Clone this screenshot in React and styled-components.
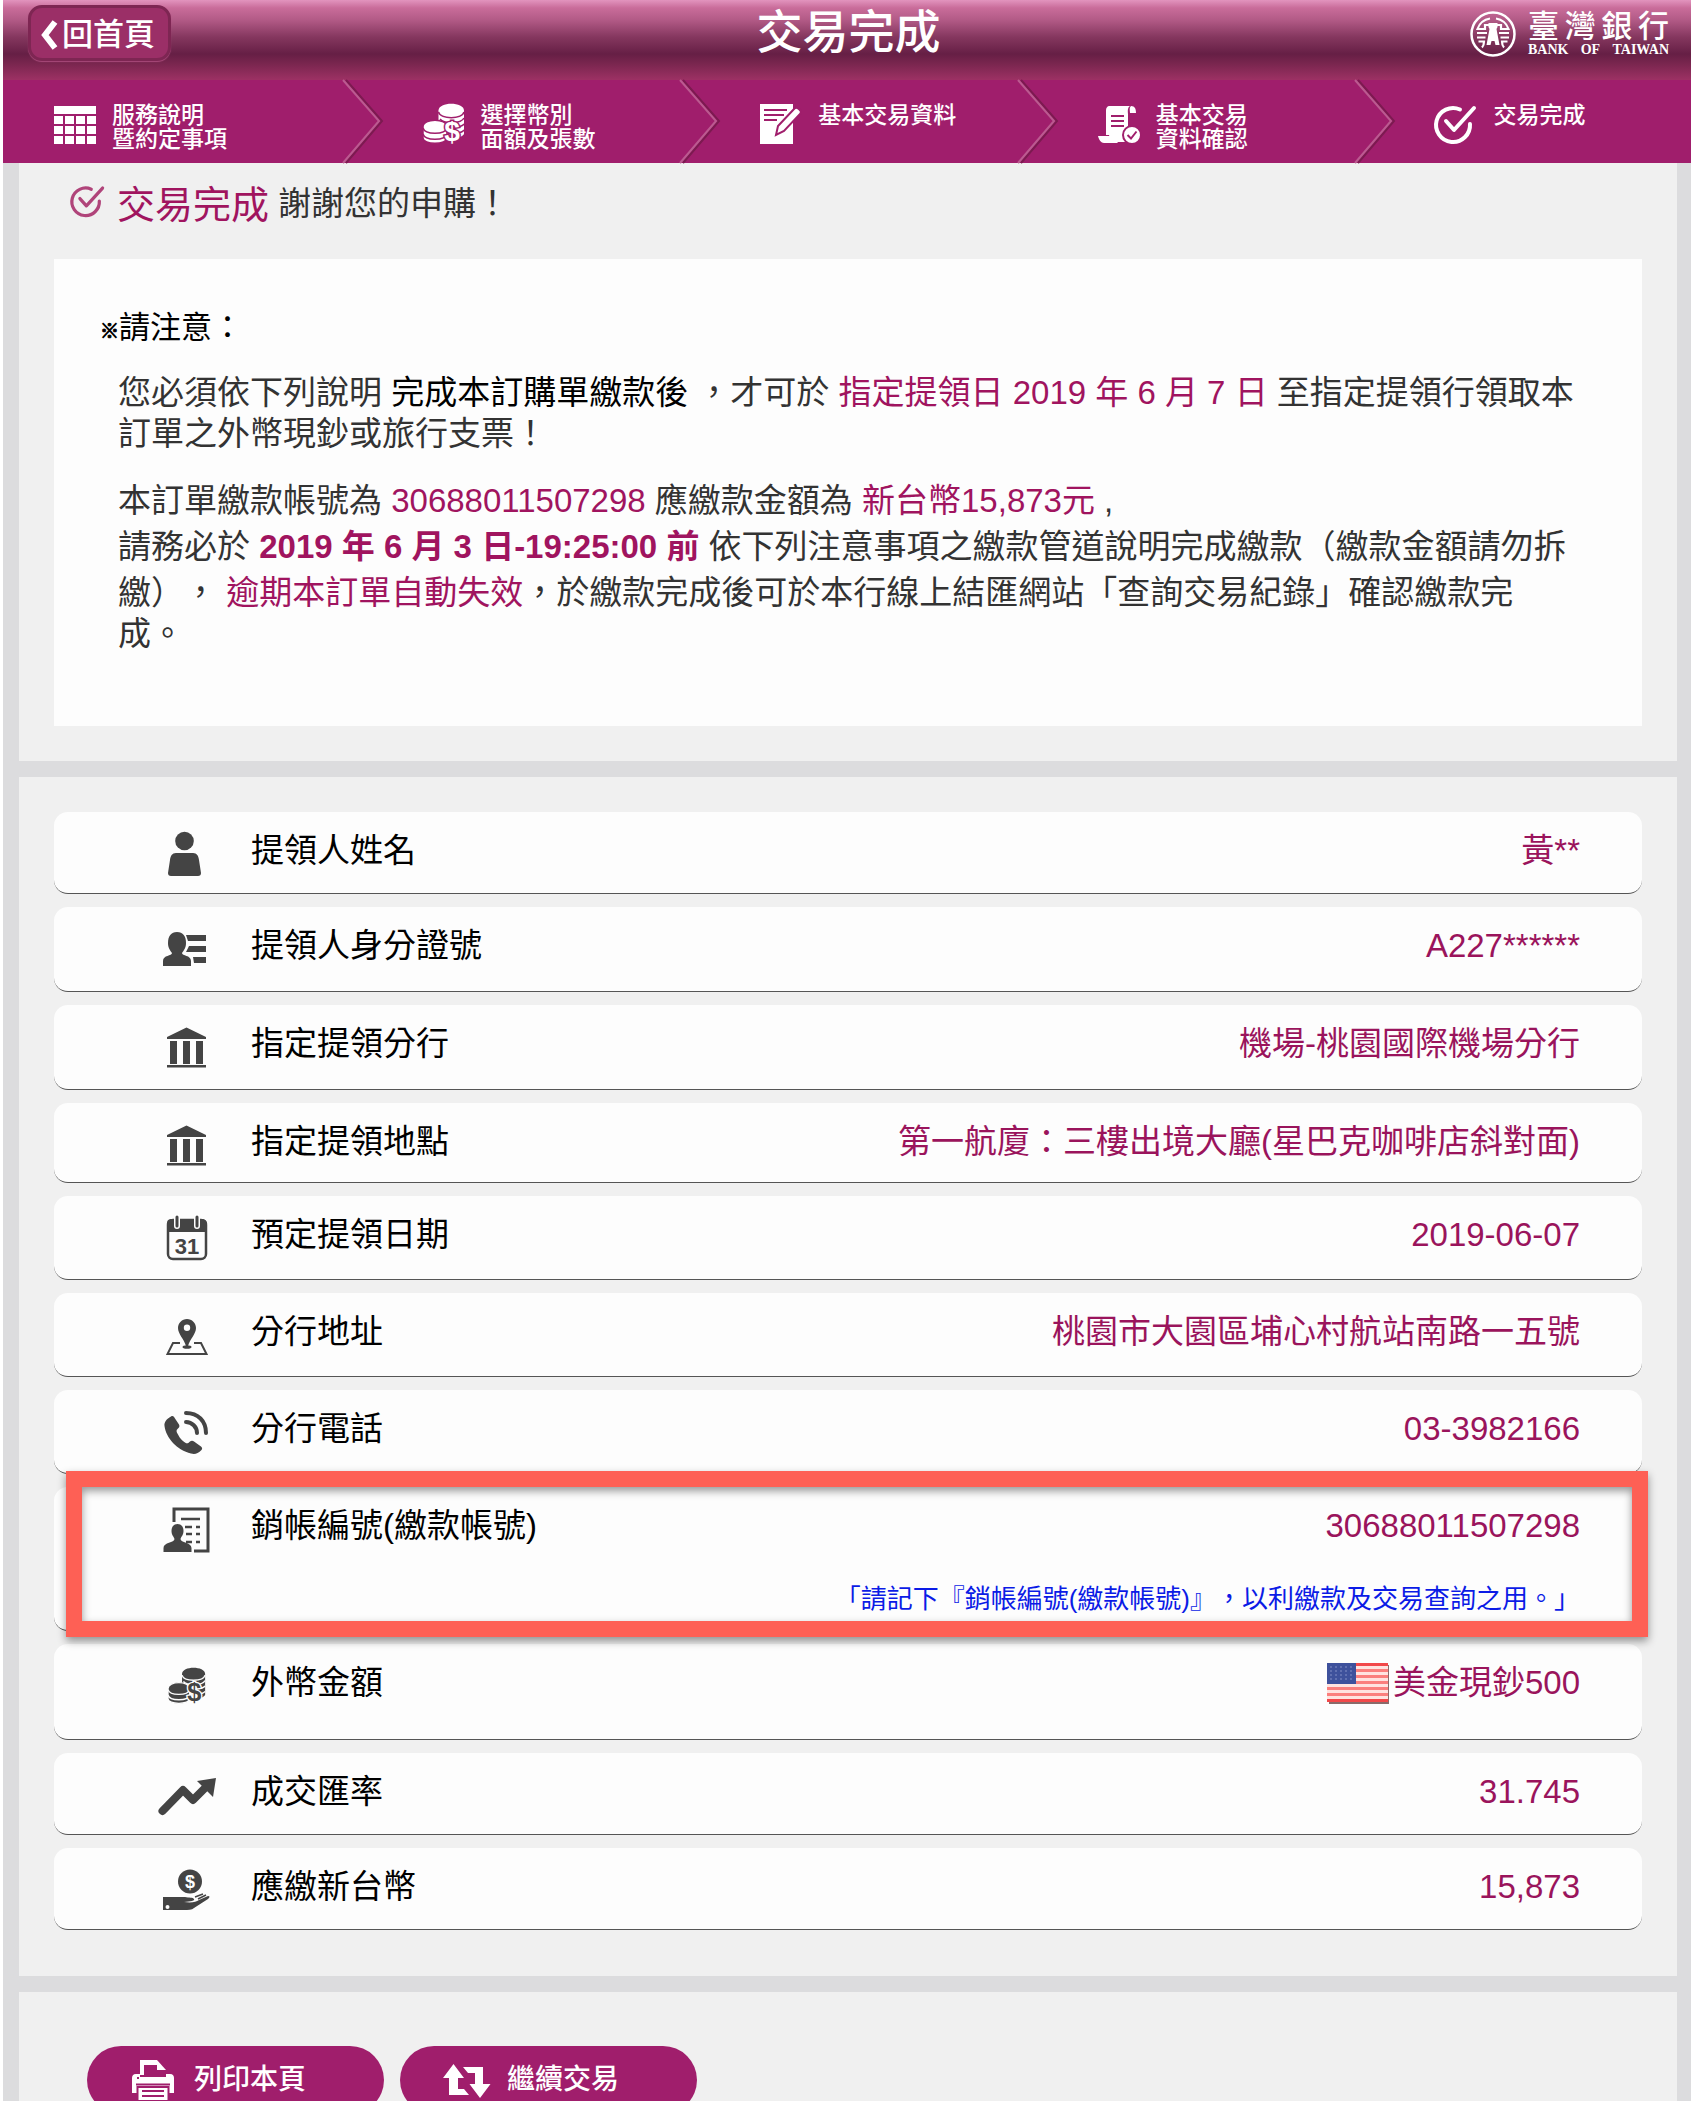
import React from 'react'
import styled, { createGlobalStyle } from 'styled-components'


const GlobalStyle = createGlobalStyle`
  * {
    box-sizing: border-box;
  }

  body {
    margin: 0;
    background: #fff;
    color: #333;
    font-family: "Liberation Sans", "Noto Sans CJK TC", sans-serif;
    font-size: 33px;
    text-spacing-trim: space-all;
  }

  svg {
    display: block;
    flex: none;
    overflow: visible;
  }

  button {
    font-family: inherit;
    cursor: pointer;
  }
`;

/* ---------- icons ---------- */

const CheckIcon = ({ size = 42, weight = 4 }) => (
  <svg width={size} height={size} viewBox="0 0 42 42" fill="none" stroke="currentColor" strokeWidth={weight} strokeLinecap="round" aria-hidden="true">
    <path d="M25 6.500A17 17 0 1 0 35 21" />
    <path d="M11 18l8 9L39 5" strokeLinejoin="round" />
  </svg>
)

const TableIcon = () => (
  <svg width="42" height="42" viewBox="0 0 42 42" fill="currentColor" aria-hidden="true">
    <path d="M0 3h42v8H0z" />
    {[13, 23, 33].map(y => [0, 11, 22, 33].map(x => (
      <rect key={`${x}-${y}`} x={x} y={y} width="9" height="8" />
    )))}
  </svg>
)

const CoinsIcon = ({ size = 42, back = '#a01e6c' }) => (
  <svg width={size} height={size} viewBox="0 0 42 42" fill="currentColor" aria-hidden="true">
    <path d="M15.500 7.500C15.500 -1.500 41 -1.500 41 7.500V31c-2 3-8 5-13 4L15.500 20z" />
    <path d="M15.500 9c2 7.500 23.500 7.500 25.500 0M17 16c4 5 21 5 24-1M20 22c5 3 18 3 21-1M22 28c5 3 16 3 19-1" fill="none" stroke={back} strokeWidth="1.500" />
    <path d="M0 24c0-9 24-9 24 0v11c0 7-24 7-24 0z" stroke={back} strokeWidth="1.500" />
    <path d="M0 25c2 7 22 7 24 0M0 31c2 7 22 7 24 0" fill="none" stroke={back} strokeWidth="1.500" />
    <text x="29" y="38" textAnchor="middle" fontFamily="Liberation Sans, sans-serif" fontWeight="bold" fontSize="28" stroke={back} strokeWidth="3" paintOrder="stroke">$</text>
  </svg>
)

const EditIcon = () => (
  <svg width="42" height="42" viewBox="0 0 42 42" fill="currentColor" aria-hidden="true">
    <path d="M0 1h33v40H0z" />
    <path d="M4 7h23M4 12h20M4 17h13" stroke="#a01e6c" strokeWidth="2" />
    <path d="M34.500 5.500c2-2 8 2 6 5L24 28l-8 4 2-9z" stroke="#a01e6c" strokeWidth="2" />
  </svg>
)

const ScrollIcon = () => (
  <svg width="42" height="42" viewBox="0 0 42 42" fill="currentColor" aria-hidden="true">
    <path d="M12 3h20c-3 2-2 6-2 8v28H15c-3 0-3-4-4-7H8V8c0-3 1-5 4-5z" />
    <path d="M33 3c4 0 5 3 5 7h-6c0-3-1-5 1-7zM0 33h17c0 3 1 5 3 7H6c-3 0-5-3-6-7z" />
    <path d="M13 13h13M13 18h13M13 23h13" stroke="#a01e6c" strokeWidth="2" />
    <circle cx="34" cy="32" r="9" stroke="#a01e6c" strokeWidth="2" />
    <path d="M29.500 32l3.500 3.500 5.500-7" fill="none" stroke="#a01e6c" strokeWidth="2" />
  </svg>
)

const RowSvg = ({ children }) => (
  <svg width="58" height="48" viewBox="0 0 58 48" fill="currentColor" aria-hidden="true">{children}</svg>
)

const PersonIcon = () => (
  <RowSvg>
    <circle cx="26.500" cy="11" r="9.300" />
    <path d="M18 23h17c4 0 5.500 3 6 7l2 13c0 2-1 3-3 3H13c-2 0-3-1-3-3l2-13c.5-4 2-7 6-7z" />
  </RowSvg>
)

const IdIcon = () => (
  <RowSvg>
    <path d="M19 7c6 0 9 4 9 11 0 5-2 7-4 10 0 3 9 2 9 8v5H5v-5c0-6 9-5 9-8-2-3-4-5-4-10 0-7 3-11 9-11z" />
    <path d="M28 10h20v6H30zM31 21h17v6H28zM35 32h13v6H36z" />
  </RowSvg>
)

const BankIcon = () => (
  <RowSvg>
    <path d="M28.500 4.500L48 14v2H9v-2zM12 18h7v23h-7zM25 18h7v23h-7zM38 18h7v23h-7zM9 42h39v2.500H9z" />
  </RowSvg>
)

const CalendarIcon = () => (
  <RowSvg>
    <rect x="10" y="6" width="38" height="39" rx="5" fill="none" stroke="currentColor" strokeWidth="2.500" />
    <path d="M9 18V9c0-3 2-4 4-4h31c3 0 5 2 5 4v9z" />
    <path d="M19 3v9M39 3v9" stroke="#fff" strokeWidth="6" strokeLinecap="round" />
    <path d="M19 3v9M39 3v9" stroke="currentColor" strokeWidth="3" strokeLinecap="round" />
    <text x="29" y="40" textAnchor="middle" fontFamily="Liberation Sans, sans-serif" fontWeight="bold" fontSize="22">31</text>
  </RowSvg>
)

const PinIcon = () => (
  <RowSvg>
    <path fillRule="evenodd" d="M29 8c5 0 9 4 9 9 0 6-6 11-8 18h-2c-2-7-8-12-8-18 0-5 4-9 9-9zm0 5.500a3.200 3.200 0 1 0 0 6.400 3.200 3.200 0 0 0 0-6.400z" />
    <path d="M22 32h-7L9.500 43h39L43 32h-7" fill="none" stroke="currentColor" strokeWidth="2" />
    <ellipse cx="29" cy="36" rx="4.500" ry="1.800" />
  </RowSvg>
)

const PhoneIcon = () => (
  <RowSvg>
    <path d="M13 8.500c2-1 3 0 4 2l4 6c1 2 0 3-1 4-2 1.500-2 3 0 6 2 4 4 6 7 8 2 1.500 3 1 5-1 1-1 3-1 4 0l7 5c1.500 1 1.500 3 0 4-3 3-6 4-10 3C19 42 8 30 6.500 18c-.5-4 2-7 6.500-9.500z" />
    <path d="M28 5c12 0 20 8 20 20M28 14c6 0 11 5 11 11" fill="none" stroke="currentColor" strokeWidth="4" strokeLinecap="round" />
  </RowSvg>
)

const AccountIcon = () => (
  <RowSvg>
    <path d="M16 17V4h34v42H36" fill="none" stroke="currentColor" strokeWidth="3" />
    <path d="M23 14h19M27 22h7M38 22h4M28 29h6M38 29h4M28 37h6M38 37h4" stroke="currentColor" strokeWidth="2.500" />
    <path d="M19.500 19c4 0 6 3 6 7s-2 5-3 8c0 4 11 3 11 9v4h-28v-4c0-6 11-5 11-9-1-3-3-4-3-8s2-7 6-7z" />
  </RowSvg>
)

const TrendIcon = () => (
  <RowSvg>
    <path d="M4.500 40L25 19l10 10 14-14" fill="none" stroke="currentColor" strokeWidth="8" strokeLinecap="round" strokeLinejoin="round" />
    <path d="M39 10l19-3-3 19z" />
  </RowSvg>
)

const HandIcon = () => (
  <RowSvg>
    <circle cx="32" cy="15.500" r="12" />
    <text x="32" y="22" textAnchor="middle" fontFamily="Liberation Sans, sans-serif" fontWeight="bold" fontSize="18" fill="#fff">$</text>
    <path fillRule="evenodd" d="M5 31h22c4 1 8 0 9 2 1 2-3 2-10 3 8 1 12 0 15-2l9-4c2 0 2 1 0 3L36 42c-2 2-6 2-10 2H5zM9.500 39a2 2 0 1 0 0 4 2 2 0 0 0 0-4z" />
    <path d="M37 31l8-3M40 33l8-4" stroke="currentColor" strokeWidth="1.500" />
  </RowSvg>
)

const PrinterIcon = () => (
  <svg width="52" height="48" viewBox="0 0 52 48" fill="currentColor" aria-hidden="true">
    <path d="M12 4h17v5h-13v10h-4z" />
    <path d="M29 4l9 10h-9z" />
    <path fillRule="evenodd" d="M8 18h4v3h26v-3h4c3 0 4 2 4 4v15H4V22c0-2 1-4 4-4zm1 3v2h2v-2z" />
    <path d="M8 28.500h34" stroke="#a01e6c" strokeWidth="2" />
    <path d="M9.500 31h31v14h-31z" stroke="#a01e6c" strokeWidth="2" />
    <path d="M14 35h22M14 40h22" stroke="#a01e6c" strokeWidth="2" />
  </svg>
)

const RepeatIcon = () => (
  <svg width="52" height="48" viewBox="0 0 52 48" fill="currentColor" aria-hidden="true">
    <path d="M12.500 8L23 22h-6v11h6l5 6H8V22H2z" />
    <path d="M22 11h20v17h7.500L39 42 28.500 28H34V17h-7z" />
  </svg>
)

const UsFlag = () => (
  <svg width="62" height="41" viewBox="0 0 62 41" role="img" aria-label="美國">
    <path d="M2 2h60v39H2z" fill="#8a6a6a" />
    <path d="M0 0h61v39H0z" fill="#ffe3e0" />
    {[0, 6, 12, 18, 24, 30, 36].map(y => (
      <rect key={y} x="0" y={y} width="61" height="3" fill={y === 0 || y === 36 ? '#f2484a' : '#fb7f7d'} />
    ))}
    <path d="M0 0h29v21H0z" fill="#3e519c" />
    {[4, 8, 12, 16].map(y => [4, 9, 14, 19, 24].map(x => (
      <circle key={`${x}-${y}`} cx={x} cy={y} r="1" fill="#6c7bb8" />
    )))}
  </svg>
)

const BankEmblem = () => (
  <svg width="46" height="46" viewBox="0 0 46 46" fill="none" stroke="#fff" aria-hidden="true">
    <circle cx="23" cy="23" r="21.500" strokeWidth="2.500" />
    <path d="M20 7.500A16 16 0 0 0 7.500 18H15v-4h4M26 7.500A16 16 0 0 1 38.500 18H31v-4h-4M7 22h10M29 22h10M7 26.500h8.500M30.500 26.500H39M8.500 30.500H14c0 3-1 5-2 6M37.500 30.500H32c0 3 1 5 2 6" strokeWidth="2.200" />
    <path d="M18.500 12h9v4l-1 2 3 16h-4l-1-4h-3l-1 4h-4l3-16-1-2z" fill="#fff" stroke="none" />
  </svg>
)

/* ---------- header ---------- */

const Page = styled.div`
  border-left: 3px solid #fff;
  background: #dcdcde;
`;

const Header = styled.header`
  display: grid;
  grid-template-columns: 1fr auto 1fr;
  align-items: start;
  height: 80px;
  padding: 5px 22px 0 25px;
  background: linear-gradient(#e294be 0, #c96c9a 8px, #b25a86 20px, #85375f 37px, #661f45 54px, #7a264f 64px, #9d3164 80px);
`;

const BackButton = styled.button`
  justify-self: start;
  display: flex;
  align-items: center;
  gap: 3px;
  height: 56px;
  padding: 4px 13px 0 8px;
  border: 3px solid #7e2653;
  border-radius: 14px;
  background: #9b2f67;
  box-shadow: 0 1px 1px #a84a7a;
  color: #fff;
  font-size: 31px;
  font-weight: 500;
  line-height: 40px;
`;

const PageTitle = styled.h1`
  margin: 0;
  color: #fff;
  font-size: 46px;
  font-weight: 500;
  line-height: 54px;
`;

const Logo = styled.a`
  justify-self: end;
  display: flex;
  gap: 12px;
  padding-top: 6px;
  color: #fff;
  text-decoration: none;
`;

const LogoName = styled.span`
  display: flex;
  flex-direction: column;
  width: 141px;
`;

const LogoLine = styled.span`
  display: flex;
  justify-content: space-between;
  font-family: ${props => props.$latin ? '"Liberation Serif", serif' : 'inherit'};
  font-size: ${props => props.$latin ? 14 : 31}px;
  font-weight: ${props => props.$latin ? 700 : 500};
  line-height: ${props => props.$latin ? 14 : 32}px;
`;

/* ---------- steps ---------- */

const Steps = styled.ol`
  display: grid;
  grid-template-columns: repeat(5, 1fr);
  height: 83px;
  margin: 0;
  padding: 0;
  background: #a01e6c;
  list-style: none;
`;

const Step = styled.li`
  position: relative;
  display: flex;
  gap: 16px;
  padding: 23px 0 0 82px;
  color: #fff;
  font-size: 23px;
  font-weight: 500;
  line-height: 24px;

  &:first-child {
    padding-left: 51px;
  }
`;

const StepArrow = styled.svg`
  position: absolute;
  top: 0;
  right: -43px;
`;

/* ---------- content ---------- */

const Panel = styled.section`
  margin: 0 14px 16px 16px;
  padding: ${props => props.$pad || '0 35px 35px'};
  background: #f0f0f0;
`;

const DoneTitle = styled.h2`
  display: flex;
  align-items: center;
  height: 76px;
  margin: 0 0 20px;
  padding-left: 17px;
  color: #333;
  font-size: 33px;
  font-weight: 400;

  svg {
    margin-right: 12px;
    color: #b0447a;
  }

  strong {
    margin-right: 9px;
    color: #a0145f;
    font-size: 38px;
    font-weight: 400;
  }
`;

const Notice = styled.div`
  padding: 48px 65px 72px 46px;
  background: #fdfdfd;
`;

const NoticeTitle = styled.h3`
  margin: 0 0 18px;
  color: #000;
  font-size: 31px;
  font-weight: 400;
  line-height: 42px;

  small {
    font-size: 19px;
    line-height: 20px;
    -webkit-text-stroke: 1px #000;
  }
`;

const NoticeText = styled.p`
  margin: 0 0 21px;
  padding-left: 18px;
  line-height: 41px;

  &:last-child {
    margin-bottom: 0;
  }
`;

const Strong = styled.span`
  color: #000;
`;

const Highlight = styled.span`
  display: inline-block;
  padding-top: 5px;
  color: #a0145f;
  font-weight: ${props => props.$bold ? 700 : 400};
`;

const Rows = styled.dl`
  display: flex;
  flex-direction: column;
  gap: 13px;
  margin: 0;
`;

const Row = styled.div`
  position: relative;
  display: grid;
  grid-template-columns: 58px auto 1fr;
  column-gap: 35px;
  align-content: start;
  min-height: ${props => props.$height}px;
  padding: 18px 62px 0 104px;
  border-bottom: 1px solid #555;
  border-radius: 14px;
  background: #fdfdfd;
  line-height: 42px;

  svg {
    color: #444;
  }
`;

const IconCell = styled.div`
  display: flex;
  align-items: center;
  justify-content: center;
  height: 48px;
`;

const Label = styled.dt`
  color: #000;
`;

const Value = styled.dd`
  display: flex;
  align-items: center;
  justify-content: flex-end;
  gap: 4px;
  height: 42px;
  margin: 0;
  color: #9a145c;
`;

const RowNote = styled.dd`
  grid-column: 1 / -1;
  margin: 25px 0 0;
  color: #0b1be6;
  font-size: 26px;
  text-align: right;
`;

/* frame drawn over the row that has to be written down */
const Marker = styled.span`
  position: absolute;
  z-index: 1;
  inset: -16px -6px -7px 12px;
  border: 16px solid #fe6055;
  filter: drop-shadow(0 4px 4px rgba(0, 0, 0, 0.4));
  pointer-events: none;
`;

const Actions = styled.footer`
  display: flex;
  gap: 16px;
  height: 109px;
  margin: 0 14px 0 16px;
  padding: 54px 68px 0;
  overflow: hidden;
  background: #f0f0f0;
`;

const ActionButton = styled.button`
  flex: none;
  display: flex;
  align-items: center;
  gap: 14px;
  width: 297px;
  height: 68px;
  padding: 0 0 0 41px;
  border: 0;
  border-radius: 34px;
  background: #a01e6c;
  color: #fff;
  font-size: 28px;
  font-weight: 500;
  line-height: 40px;
`;

const steps = [
  { icon: <TableIcon />, lines: ['服務說明', '暨約定事項'] },
  { icon: <CoinsIcon />, lines: ['選擇幣別', '面額及張數'] },
  { icon: <EditIcon />, lines: ['基本交易資料'] },
  { icon: <ScrollIcon />, lines: ['基本交易', '資料確認'] },
  { icon: <CheckIcon />, lines: ['交易完成'] },
]

const rows = [
  { icon: <PersonIcon />, label: '提領人姓名', value: '黃**', height: 82 },
  { icon: <IdIcon />, label: '提領人身分證號', value: 'A227******', height: 85 },
  { icon: <BankIcon />, label: '指定提領分行', value: '機場-桃園國際機場分行', height: 85 },
  { icon: <BankIcon />, label: '指定提領地點', value: '第一航廈：三樓出境大廳(星巴克咖啡店斜對面)', height: 80 },
  { icon: <CalendarIcon />, label: '預定提領日期', value: '2019-06-07', height: 84 },
  { icon: <PinIcon />, label: '分行地址', value: '桃園市大園區埔心村航站南路一五號', height: 84 },
  { icon: <PhoneIcon />, label: '分行電話', value: '03-3982166', height: 84 },
  {
    icon: <AccountIcon />,
    label: '銷帳編號(繳款帳號)',
    value: '30688011507298',
    note: '「請記下『銷帳編號(繳款帳號)』，以利繳款及交易查詢之用。」',
    height: 144,
  },
  { icon: <CoinsIcon size={38} back="#fdfdfd" />, label: '外幣金額', value: '美金現鈔500', flag: <UsFlag />, height: 96 },
  { icon: <TrendIcon />, label: '成交匯率', value: '31.745', height: 82 },
  { icon: <HandIcon />, label: '應繳新台幣', value: '15,873', height: 82 },
]

export default function App () {

  return (
    <Page lang="zh-Hant">
      <GlobalStyle />

      <Header>
        <BackButton type="button">
          <svg width="20" height="30" viewBox="0 0 20 30" fill="none" stroke="currentColor" strokeWidth="6" aria-hidden="true">
            <path d="M16 2L6 15l10 13" />
          </svg>
          回首頁
        </BackButton>
        <PageTitle>交易完成</PageTitle>
        <Logo href="#" aria-label="臺灣銀行 BANK OF TAIWAN">
          <BankEmblem />
          <LogoName>
            <LogoLine><span>臺</span><span>灣</span><span>銀</span><span>行</span></LogoLine>
            <LogoLine $latin><span>BANK</span><span>OF</span><span>TAIWAN</span></LogoLine>
          </LogoName>
        </Logo>
      </Header>

      <Steps>
        {steps.map((step, index) => (
          <Step key={index}>
            {step.icon}
            <span>
              {step.lines.map(line => <div key={line}>{line}</div>)}
            </span>
            {index < steps.length - 1 && (
              <StepArrow width="42" height="83" viewBox="0 0 42 83" fill="none" strokeWidth="2" aria-hidden="true">
                <path d="M4 0l36 41L4 83" stroke="#7c1a50" />
                <path d="M1 0l36 41L1 83" stroke="#bb5a90" />
              </StepArrow>
            )}
          </Step>
        ))}
      </Steps>

      <Panel>
        <DoneTitle>
          <CheckIcon size={34} weight={4} />
          <strong>交易完成</strong>
          謝謝您的申購！
        </DoneTitle>
        <Notice>
          <NoticeTitle><small>※</small>請注意：</NoticeTitle>
          <NoticeText>
            您必須依下列說明 <Strong>完成本訂購單繳款後</Strong> ，才可於 <Highlight>指定提領日 2019 年 6 月 7 日</Highlight> 至指定提領行領取本訂單之外幣現鈔或旅行支票！
          </NoticeText>
          <NoticeText>
            本訂單繳款帳號為 <Highlight>30688011507298</Highlight> 應繳款金額為 <Highlight>新台幣15,873元</Highlight> ,<br />
            請務必於 <Highlight $bold>2019 年 6 月 3 日-19:25:00 前</Highlight> 依下列注意事項之繳款管道說明完成繳款（繳款金額請勿拆繳）， <Highlight>逾期本訂單自動失效</Highlight>，於繳款完成後可於本行線上結匯網站「查詢交易紀錄」確認繳款完成。
          </NoticeText>
        </Notice>
      </Panel>

      <Panel $pad="35px 35px 46px">
        <Rows>
          {rows.map(row => (
            <Row key={row.label} $height={row.height}>
              <IconCell>{row.icon}</IconCell>
              <Label>{row.label}</Label>
              <Value>{row.flag}{row.value}</Value>
              {row.note && <RowNote>{row.note}</RowNote>}
              {row.note && <Marker />}
            </Row>
          ))}
        </Rows>
      </Panel>

      <Actions>
        <ActionButton type="button"><PrinterIcon />列印本頁</ActionButton>
        <ActionButton type="button"><RepeatIcon />繼續交易</ActionButton>
      </Actions>
    </Page>
  )

}
